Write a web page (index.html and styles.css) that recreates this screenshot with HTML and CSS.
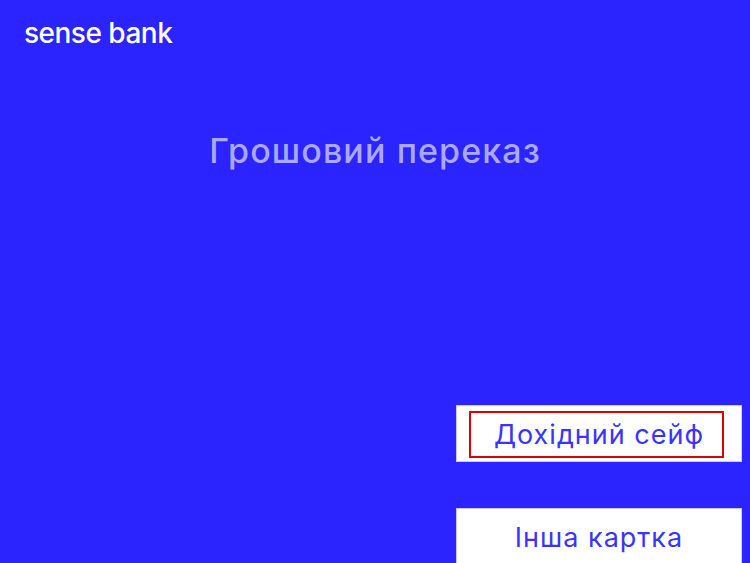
FILE: index.html
```html
<!DOCTYPE html>
<html lang="uk">
<head>
    <meta charset="UTF-8">
    <meta name="viewport" content="width=device-width, initial-scale=1.0">
    <title>Грошовий переказ</title>
    <link rel="stylesheet" href="styles.css">
</head>
<body>
    <div class="logo">sense bank</div>
    <h1 class="title">Грошовий переказ</h1>
    <div class="actions">
        <button type="button" class="action">
            <span class="action-label focused">Дохідний сейф</span>
        </button>
        <button type="button" class="action">
            <span class="action-label">Інша картка</span>
        </button>
    </div>
</body>
</html>
```

FILE: styles.css
```css
html, body {
    height: 100%;
}
body {
    margin: 0;
    height: 563px;
    overflow: hidden;
    display: flex;
    flex-direction: column;
    background-color: #2b24ff;
    font-family: Inter, "Noto Sans", sans-serif;
}
.logo {
    padding: 17px 0 0 24px;
    height: 32px;
    line-height: 32px;
    font-size: 28px;
    font-weight: 500;
    letter-spacing: -0.5px;
    color: #fff;
}
.title {
    margin: 81px 0 0;
    height: 42px;
    line-height: 42px;
    text-align: center;
    font-size: 34px;
    font-weight: 500;
    letter-spacing: 1.1px;
    color: #aaa8ff;
}
.actions {
    margin-top: 233px;
    padding-right: 8px;
    display: flex;
    flex-direction: column;
    align-items: flex-end;
    gap: 46px;
}
.action {
    width: 286px;
    height: 57px;
    flex-shrink: 0;
    padding: 5px 0 0 12px;
    border: 1px solid #c9c8ff;
    border-radius: 0;
    background: #fff;
    font-family: inherit;
    display: flex;
    align-items: flex-start;
    justify-content: flex-start;
}
.action-label {
    box-sizing: border-box;
    width: 255px;
    height: 47px;
    padding-left: 5px;
    line-height: 47px;
    text-align: center;
    font-size: 27px;
    letter-spacing: 1px;
    color: #3a34ff;
}
.focused {
    outline: 2px solid #e00000;
    outline-offset: -2px;
}
```
